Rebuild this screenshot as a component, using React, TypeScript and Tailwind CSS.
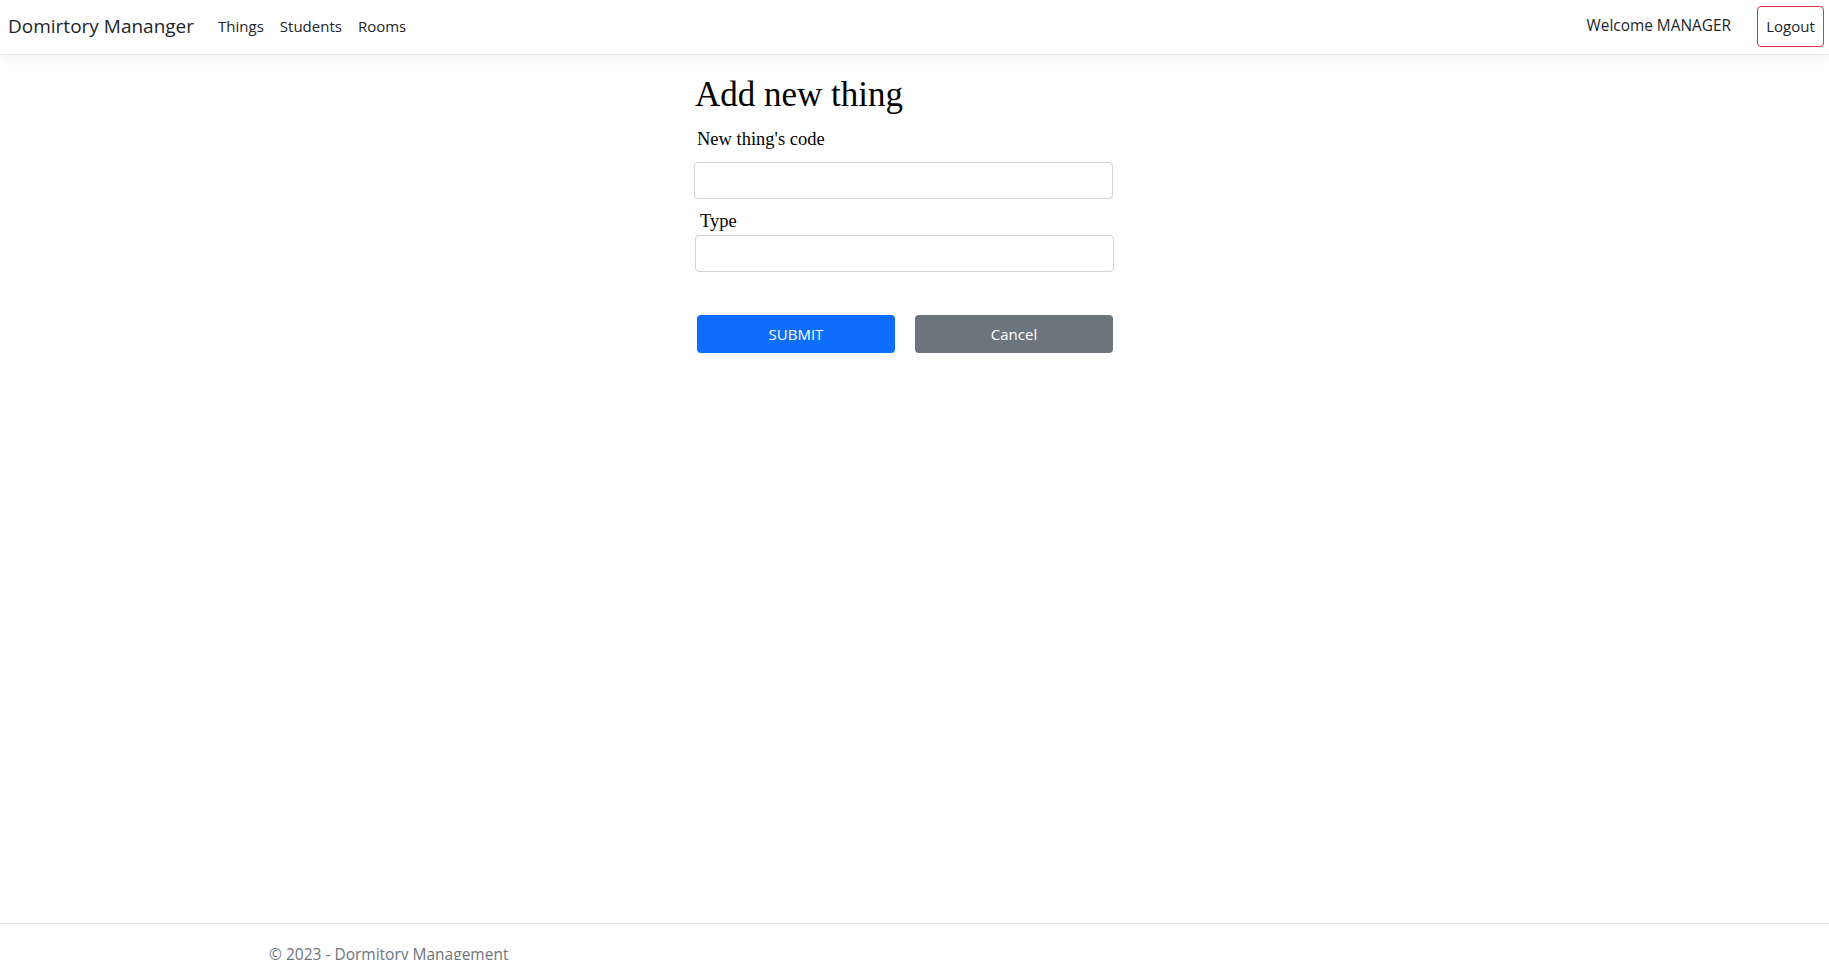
import React from 'react';

const sans = "font-['Open_Sans','Noto_Sans',sans-serif]";
const serif = "font-['Liberation_Serif','Times_New_Roman',serif]";

function Navbar() {
  return (
    <nav className={`${sans} relative z-10 flex h-[55px] shrink-0 items-center justify-between border-b border-[#e5e5e5] bg-white pb-[2px] shadow-[0_4px_12px_rgba(0,0,0,0.05)]`}>
      <div className="flex items-center">
        <a className="ml-[8px] text-[19px] leading-[28px] text-[#212529]">Domirtory Mananger</a>
        <ul className="ml-[24px] flex items-center gap-[16px] text-[15px] text-[#212529]">
          <li><a>Things</a></li>
          <li><a>Students</a></li>
          <li><a>Rooms</a></li>
        </ul>
      </div>
      <div className="flex items-center">
        <span className="text-[15.4px] text-[#212529]">Welcome MANAGER</span>
        <button className="ml-[26px] mr-[5px] h-[41px] w-[67px] rounded-[4px] border border-[#dc3545] text-[15px] text-[#212529]">
          Logout
        </button>
      </div>
    </nav>
  );
}

export default function App() {
  return (
    <div className="flex h-screen flex-col overflow-hidden bg-white">
      <Navbar />
      <main className="flex-1">
        <div className={`${serif} ml-[694px] w-[421px] text-black`}>
          <h2 className="ml-[1px] mt-[21px] text-[35px] leading-[38px]">Add new thing</h2>
          <label className="ml-[3px] mt-[13px] block text-[18.5px] leading-[24px]">New thing's code</label>
          <input className="mt-[11px] block h-[37px] w-[419px] rounded-[4px] border border-[#ced4da] px-3" />
          <label className="ml-[6px] mt-[10px] block text-[18.5px] leading-[24px]">Type</label>
          <input className="ml-[1px] mt-[2px] block h-[37px] w-[419px] rounded-[4px] border border-[#ced4da] px-3" />
          <div className={`${sans} ml-[3px] mt-[43px] flex gap-[20px]`}>
            <button className="h-[38px] w-[198px] rounded-[4px] bg-[#0d6efd] text-[15px] text-white">SUBMIT</button>
            <button className="h-[38px] w-[198px] rounded-[4px] bg-[#6c757d] text-[15px] text-white">Cancel</button>
          </div>
        </div>
      </main>
      <footer className={`${sans} h-[37px] shrink-0 border-t border-[#dee2e6] text-[15.5px] leading-[60px] text-[#6c757d]`}>
        <div className="ml-[269px] whitespace-nowrap">© 2023 - Dormitory Management</div>
      </footer>
    </div>
  );
}
